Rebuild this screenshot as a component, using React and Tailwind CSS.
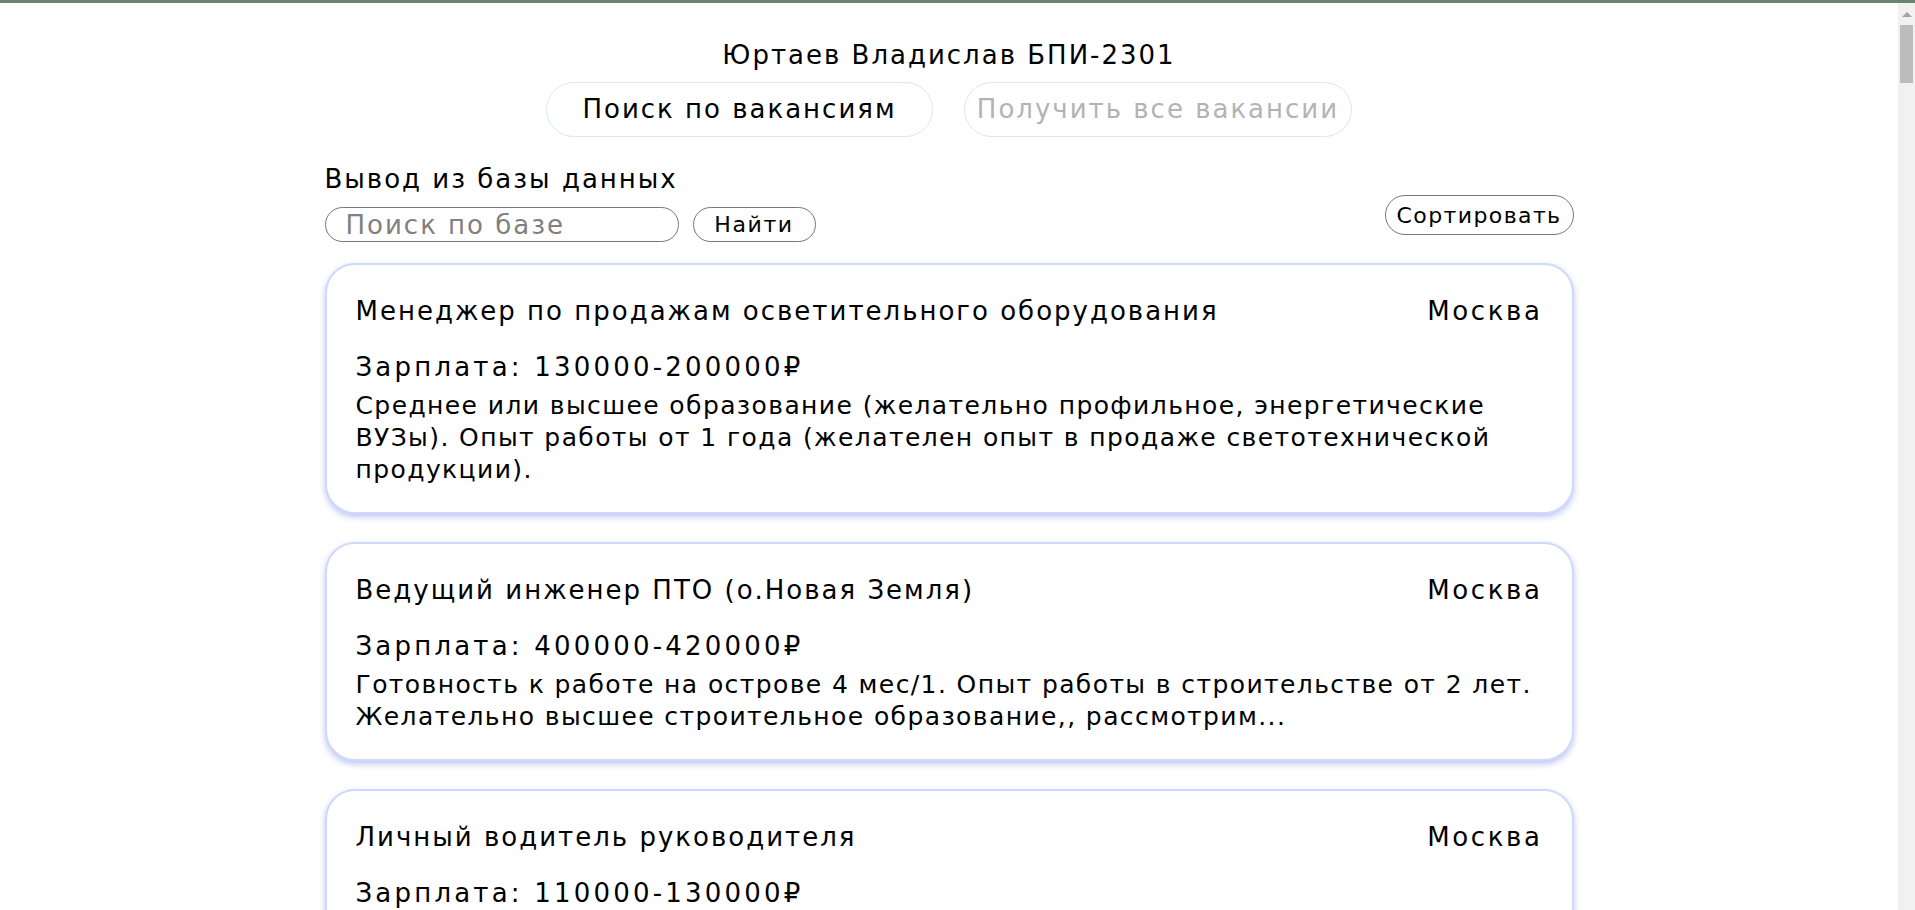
import React, { useState } from "react";

const vacancies = [
  {
    id: 1,
    title: "Менеджер по продажам осветительного оборудования",
    city: "Москва",
    salary: "130000-200000₽",
    text: "Среднее или высшее образование (желательно профильное, энергетические ВУЗы). Опыт работы от 1 года (желателен опыт в продаже светотехнической продукции).",
  },
  {
    id: 2,
    title: "Ведущий инженер ПТО (о.Новая Земля)",
    city: "Москва",
    salary: "400000-420000₽",
    text: "Готовность к работе на острове 4 мес/1. Опыт работы в строительстве от 2 лет. Желательно высшее строительное образование,, рассмотрим...",
  },
  {
    id: 3,
    title: "Личный водитель руководителя",
    city: "Москва",
    salary: "110000-130000₽",
    text: "Опыт работы личным водителем от 3 лет. Безаварийный стаж вождения, знание города.",
  },
];

function VacancyCard({ v }) {
  return (
    <div className="bg-white rounded-[30px] border-2 border-[#d0d9fb] shadow-[0_3px_6px_rgba(110,130,220,0.45)] px-[29px] pt-[30px] pb-[26px]">
      <div className="flex justify-between items-center text-[26px] leading-[32px] tracking-[2px]">
        <span>{v.title}</span>
        <span className="tracking-[2.6px]">{v.city}</span>
      </div>
      <div className="mt-[24px] text-[26px] leading-[32px] tracking-[3.2px]">Зарплата: {v.salary}</div>
      <p className="mt-[7px] text-[25px] leading-[32px] tracking-[1.4px]">{v.text}</p>
    </div>
  );
}

export default function App() {
  const [query, setQuery] = useState("");

  return (
    <div className="min-h-screen bg-white text-black font-['DejaVu_Sans',sans-serif] flex flex-col">
      <div className="h-[3px] bg-[#6b8570]"></div>

      <div className="flex flex-1">
        <main className="flex-1">
          {/* шапка */}
          <div className="flex flex-col items-center pt-[36px]">
            <h1 className="text-[26px] leading-[32px] tracking-[2px]">Юртаев Владислав БПИ-2301</h1>
            <div className="flex gap-[31px] mt-[11px]">
              <button className="w-[387px] h-[55px] rounded-full border border-[#dce4fa] text-[26px] tracking-[2px]">
                Поиск по вакансиям
              </button>
              <button className="w-[388px] h-[55px] rounded-full border border-[#dce4fa] text-[26px] tracking-[2px] text-[#b3b3b3]">
                Получить все вакансии
              </button>
            </div>
          </div>

          {/* база */}
          <div className="w-[1249px] mx-auto mt-[27px] pb-[40px]">
            <div className="flex justify-between items-end">
              <div>
                <h2 className="text-[26px] leading-[30px] tracking-[2px]">Вывод из базы данных</h2>
                <div className="flex gap-[14px] mt-[13px]">
                  <input
                    value={query}
                    onChange={(e) => setQuery(e.target.value)}
                    placeholder="Поиск по базе"
                    className="w-[354px] h-[35px] rounded-full border border-[#777] px-[20px] text-[26px] leading-none tracking-[2px] placeholder:text-[#808080] outline-none"
                  />
                  <button className="w-[123px] h-[35px] rounded-full border border-[#777] text-[22px] tracking-[1.6px]">
                    Найти
                  </button>
                </div>
              </div>
              <button className="w-[189px] h-[40px] rounded-full border border-[#777] text-[22px] tracking-[1.4px] mb-[7px]">
                Сортировать
              </button>
            </div>

            <div className="flex flex-col gap-[28px] mt-[21px]">
              {vacancies.map((v) => (
                <VacancyCard key={v.id} v={v} />
              ))}
            </div>
          </div>
        </main>

        {/* полоса прокрутки */}
        <aside className="w-[17px] bg-[#f1f1f1] flex flex-col items-center">
          <div className="mt-[9px] w-0 h-0 border-l-[5px] border-r-[5px] border-b-[5px] border-l-transparent border-r-transparent border-b-[#a3a3a3]"></div>
          <div className="mt-[8px] w-[13px] h-[58px] bg-[#bcbcbc]"></div>
        </aside>
      </div>
    </div>
  );
}
